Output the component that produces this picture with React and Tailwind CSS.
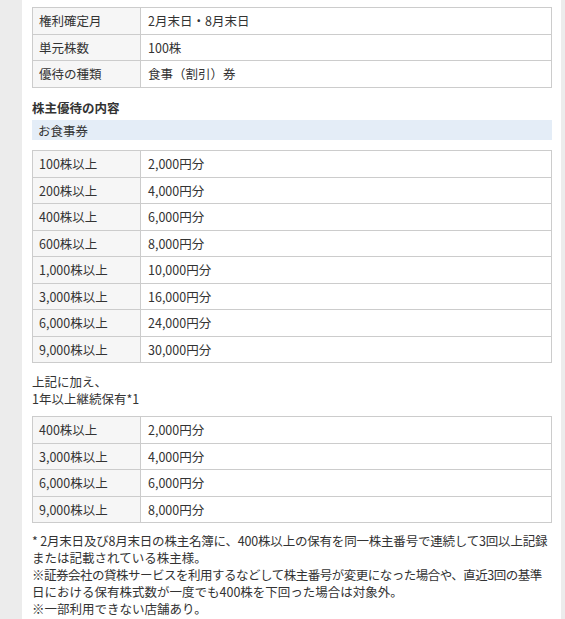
const basicInfo = [
  ["権利確定月", "2月末日・8月末日"],
  ["単元株数", "100株"],
  ["優待の種類", "食事（割引）券"],
];

const mealTickets = [
  ["100株以上", "2,000円分"],
  ["200株以上", "4,000円分"],
  ["400株以上", "6,000円分"],
  ["600株以上", "8,000円分"],
  ["1,000株以上", "10,000円分"],
  ["3,000株以上", "16,000円分"],
  ["6,000株以上", "24,000円分"],
  ["9,000株以上", "30,000円分"],
];

const longTermBonus = [
  ["400株以上", "2,000円分"],
  ["3,000株以上", "4,000円分"],
  ["6,000株以上", "6,000円分"],
  ["9,000株以上", "8,000円分"],
];

function InfoTable({ rows, className = "" }) {
  return (
    <div className={`border-t border-l border-[#cccccc] ${className}`}>
      {rows.map(([label, value]) => (
        <div key={label} className="flex h-[26.5px]">
          <div className="flex w-[108px] shrink-0 items-center border-r border-b border-[#cccccc] bg-[#f6f6f6] pl-[6px]">
            {label}
          </div>
          <div className="flex flex-1 items-center border-r border-b border-[#cccccc] bg-white pl-[7px]">
            {value}
          </div>
        </div>
      ))}
    </div>
  );
}

export default function App() {
  return (
    <div
      className="flex h-[619px] w-full overflow-hidden bg-[#ececec] text-[12.5px] leading-[17px] text-[#333333]"
      style={{ fontFamily: '"Noto Sans CJK JP", "Noto Sans", sans-serif' }}
    >
      <div className="ml-[22px] w-[539px] shrink-0 bg-white pt-[7px] pr-[9px] pl-[10px]">
        <InfoTable rows={basicInfo} />

        <h3 className="mt-[11.5px] font-bold">株主優待の内容</h3>

        <div className="mt-[4px] flex h-[20px] items-center bg-[#e4edf7] pl-[6px]">
          お食事券
        </div>

        <InfoTable rows={mealTickets} className="mt-[10px]" />

        <p className="mt-[9.5px]">
          上記に加え、
          <br />
          1年以上継続保有*1
        </p>

        <InfoTable rows={longTermBonus} className="mt-[9.5px]" />

        <div className="mt-[9px]">
          <div className="whitespace-nowrap tracking-[-0.2px]">
            * 2月末日及び8月末日の株主名簿に、400株以上の保有を同一株主番号で連続して3回以上記録
          </div>
          <div>または記載されている株主様。</div>
          <div className="whitespace-nowrap tracking-[-0.5px]">
            ※証券会社の貸株サービスを利用するなどして株主番号が変更になった場合や、直近3回の基準
          </div>
          <div>日における保有株式数が一度でも400株を下回った場合は対象外。</div>
          <div>※一部利用できない店舗あり。</div>
        </div>
      </div>
    </div>
  );
}
